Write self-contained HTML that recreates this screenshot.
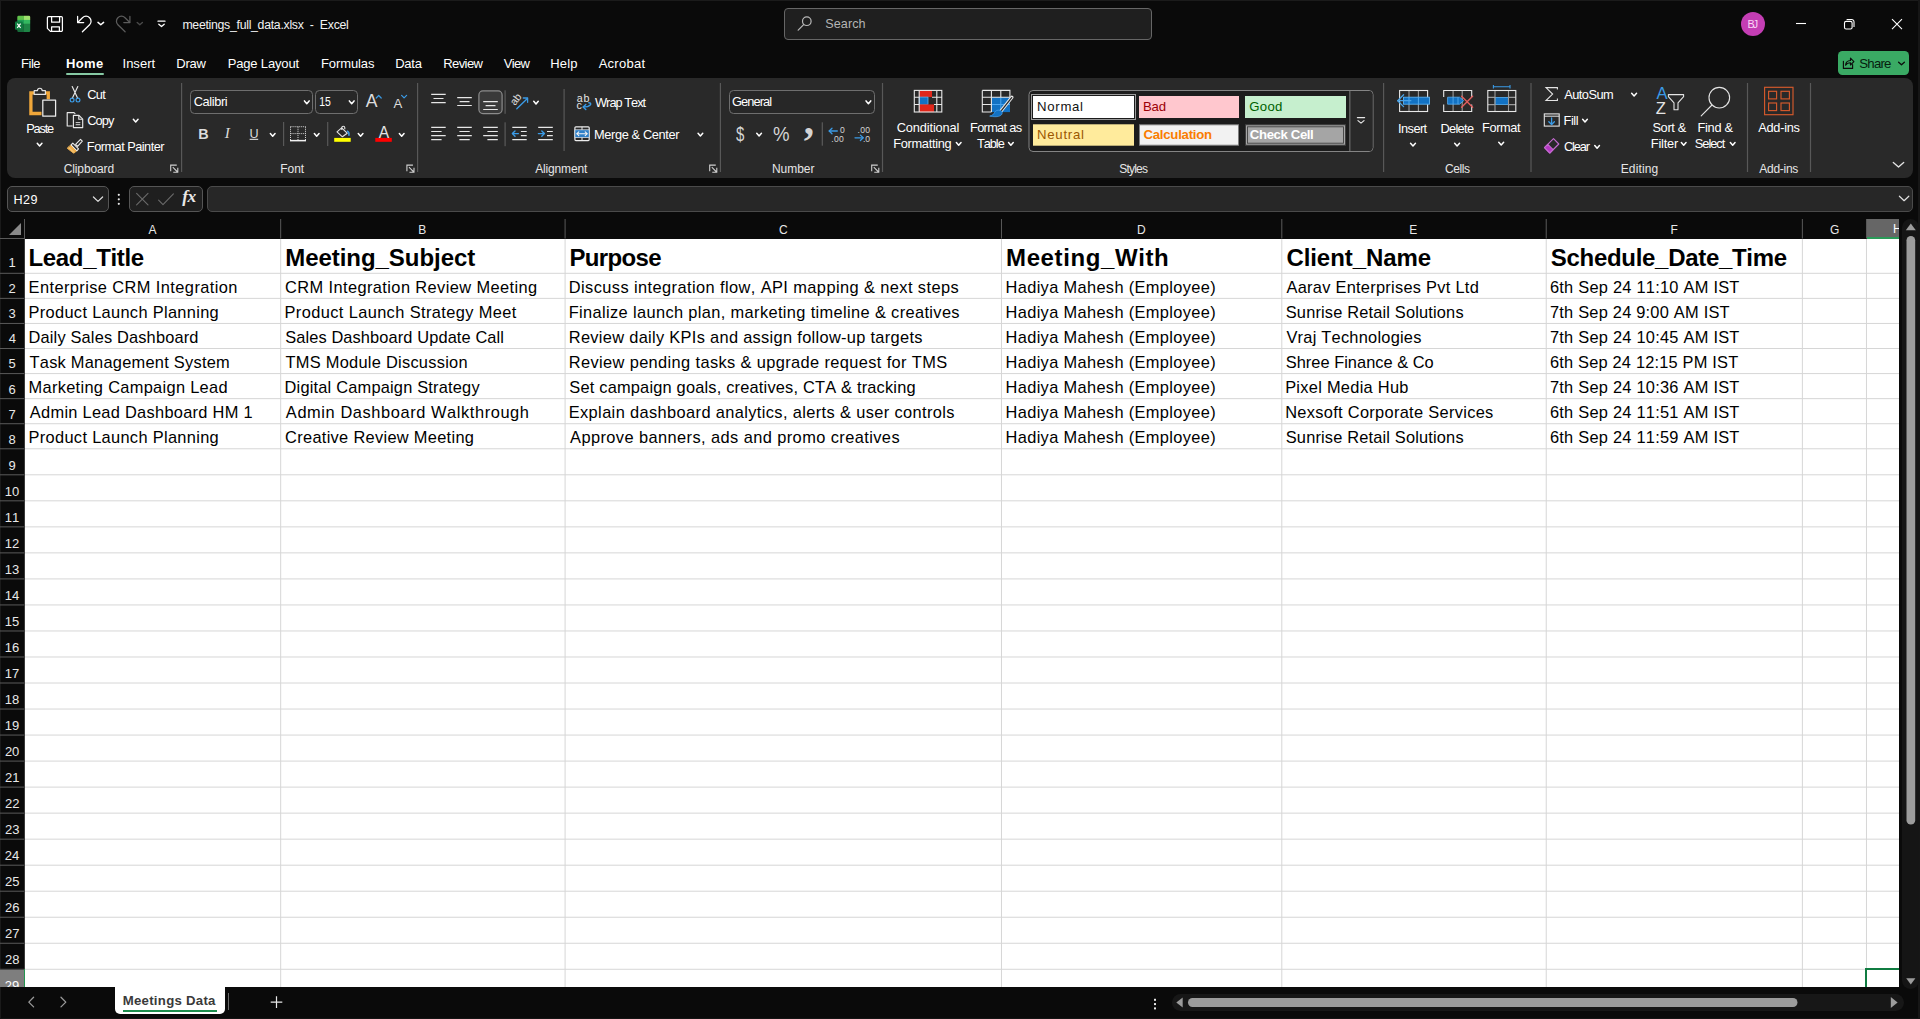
<!DOCTYPE html>
<html lang="en"><head><meta charset="utf-8"><title>meetings_full_data.xlsx - Excel</title>
<style>
html,body{margin:0;padding:0;background:#0a0a0a;}
body{width:1920px;height:1019px;position:relative;overflow:hidden;font-family:"Liberation Sans",sans-serif;font-kerning:none;-webkit-font-smoothing:antialiased;}
.t{position:absolute;white-space:pre;line-height:1;}
.r{position:absolute;}
svg{overflow:visible}
</style></head>
<body>
<div class="r" style="left:0px;top:0px;width:1920px;height:1019px;background:#0a0a0a;"></div>
<div class="r" style="left:0px;top:0px;width:1920px;height:1px;background:#1b1b1b;"></div>
<div class="r" style="left:1918px;top:0px;width:2px;height:1019px;background:#161616;"></div>
<div class="r" style="left:0px;top:0px;width:1px;height:1019px;background:#1a1a1a;"></div>
<div class="r" style="left:0px;top:1018px;width:1920px;height:1px;background:#141414;"></div>
<div class="r" style="left:7px;top:78px;width:1906px;height:100px;background:#292929;border-radius:8px;"></div>
<div class="r" style="left:25px;top:239px;width:1874px;height:748px;background:#fff;"></div>
<svg class="r" style="left:0;top:0" width="1920" height="1019" viewBox="0 0 1920 1019"><path d="M280.68 239V987M565.08 239V987M1001.47 239V987M1281.80 239V987M1546.23 239V987M1802.37 239V987M1866.47 239V987M25 273.30H1899M25 298.37H1899M25 323.44H1899M25 348.51H1899M25 373.58H1899M25 398.65H1899M25 423.72H1899M25 448.79H1899M25 474.81H1899M25 500.84H1899M25 526.87H1899M25 552.89H1899M25 578.91H1899M25 604.94H1899M25 630.97H1899M25 656.99H1899M25 683.01H1899M25 709.04H1899M25 735.07H1899M25 761.09H1899M25 787.12H1899M25 813.14H1899M25 839.16H1899M25 865.19H1899M25 891.21H1899M25 917.24H1899M25 943.26H1899M25 969.29H1899" stroke="#d6d6d6" stroke-width="1" fill="none"/><path d="M24.50 219V238.5M280.68 219V238.5M565.08 219V238.5M1001.47 219V238.5M1281.80 219V238.5M1546.23 219V238.5M1802.37 219V238.5M1866.47 219V238.5M0 238.5H25M0 273.30H24.5M0 298.37H24.5M0 323.44H24.5M0 348.51H24.5M0 373.58H24.5M0 398.65H24.5M0 423.72H24.5M0 448.79H24.5M0 474.81H24.5M0 500.84H24.5M0 526.87H24.5M0 552.89H24.5M0 578.91H24.5M0 604.94H24.5M0 630.97H24.5M0 656.99H24.5M0 683.01H24.5M0 709.04H24.5M0 735.07H24.5M0 761.09H24.5M0 787.12H24.5M0 813.14H24.5M0 839.16H24.5M0 865.19H24.5M0 891.21H24.5M0 917.24H24.5M0 943.26H24.5M0 969.29H24.5" stroke="#5a5a5a" stroke-width="1" fill="none"/><path d="M24.5 239V987" stroke="#3a3a3a" stroke-width="1" fill="none"/></svg>
<div class="r" style="left:1867px;top:219px;width:32px;height:19px;background:#666;"></div>
<div class="r" style="left:1867px;top:237px;width:32px;height:1.5px;background:#2a9a58;"></div>
<div class="r" style="left:0px;top:969.8px;width:24px;height:17.2px;background:#7e7e7e;"></div>
<div class="r" style="left:23.5px;top:969px;width:1.5px;height:18px;background:#23964f;"></div>
<svg class="r" style="left:9px;top:223px" width="13" height="13"><path d="M12 0V12H0Z" fill="#8a8a8a"/></svg>
<span class="t" style="left:148.50px;top:224.00px;font-size:12px;color:#e8e8e8;">A</span>
<span class="t" style="left:418.32px;top:224.00px;font-size:12px;color:#e8e8e8;">B</span>
<span class="t" style="left:779.09px;top:224.00px;font-size:12px;color:#e8e8e8;">C</span>
<span class="t" style="left:1136.96px;top:224.00px;font-size:12px;color:#e8e8e8;">D</span>
<span class="t" style="left:1409.26px;top:224.00px;font-size:12px;color:#e8e8e8;">E</span>
<span class="t" style="left:1670.58px;top:224.00px;font-size:12px;color:#e8e8e8;">F</span>
<span class="t" style="left:1829.98px;top:224.00px;font-size:12px;color:#e8e8e8;">G</span>
<div class="r" style="left:1867px;top:219px;width:32px;height:19px;overflow:hidden"><span class="t" style="left:26px;top:4.3px;font-size:12px;color:#fff">H</span></div>
<span class="t" style="left:8.41px;top:256.00px;font-size:13px;color:#e8e8e8;">1</span>
<span class="t" style="left:8.59px;top:282.00px;font-size:13px;color:#e8e8e8;">2</span>
<span class="t" style="left:8.62px;top:307.00px;font-size:13px;color:#e8e8e8;">3</span>
<span class="t" style="left:8.63px;top:332.00px;font-size:13px;color:#e8e8e8;">4</span>
<span class="t" style="left:8.60px;top:357.00px;font-size:13px;color:#e8e8e8;">5</span>
<span class="t" style="left:8.54px;top:383.00px;font-size:13px;color:#e8e8e8;">6</span>
<span class="t" style="left:8.58px;top:408.00px;font-size:13px;color:#e8e8e8;">7</span>
<span class="t" style="left:8.59px;top:433.00px;font-size:13px;color:#e8e8e8;">8</span>
<span class="t" style="left:8.59px;top:459.00px;font-size:13px;color:#e8e8e8;">9</span>
<span class="t" style="left:4.73px;top:485.00px;font-size:13px;color:#e8e8e8;">10</span>
<span class="t" style="left:4.79px;top:511.00px;font-size:13px;color:#e8e8e8;">11</span>
<span class="t" style="left:4.80px;top:537.00px;font-size:13px;color:#e8e8e8;">12</span>
<span class="t" style="left:4.76px;top:563.00px;font-size:13px;color:#e8e8e8;">13</span>
<span class="t" style="left:4.67px;top:589.00px;font-size:13px;color:#e8e8e8;">14</span>
<span class="t" style="left:4.75px;top:615.00px;font-size:13px;color:#e8e8e8;">15</span>
<span class="t" style="left:4.76px;top:641.00px;font-size:13px;color:#e8e8e8;">16</span>
<span class="t" style="left:4.80px;top:667.00px;font-size:13px;color:#e8e8e8;">17</span>
<span class="t" style="left:4.76px;top:693.00px;font-size:13px;color:#e8e8e8;">18</span>
<span class="t" style="left:4.78px;top:719.00px;font-size:13px;color:#e8e8e8;">19</span>
<span class="t" style="left:4.90px;top:745.00px;font-size:13px;color:#e8e8e8;">20</span>
<span class="t" style="left:4.96px;top:771.00px;font-size:13px;color:#e8e8e8;">21</span>
<span class="t" style="left:4.97px;top:797.00px;font-size:13px;color:#e8e8e8;">22</span>
<span class="t" style="left:4.93px;top:823.00px;font-size:13px;color:#e8e8e8;">23</span>
<span class="t" style="left:4.83px;top:849.00px;font-size:13px;color:#e8e8e8;">24</span>
<span class="t" style="left:4.92px;top:875.00px;font-size:13px;color:#e8e8e8;">25</span>
<span class="t" style="left:4.93px;top:901.00px;font-size:13px;color:#e8e8e8;">26</span>
<span class="t" style="left:4.97px;top:927.00px;font-size:13px;color:#e8e8e8;">27</span>
<span class="t" style="left:4.93px;top:953.00px;font-size:13px;color:#e8e8e8;">28</span>
<div class="r" style="left:0;top:969px;width:23px;height:18px;overflow:hidden"><span class="t" style="left:4.8px;top:9.5px;font-size:13px;color:#fff">29</span></div>
<div class="r" style="left:1865px;top:968px;width:34px;height:19px;background:transparent;border:2px solid #107c41;border-right:none;border-bottom:none;box-sizing:border-box;"></div>
<span class="t" style="left:28.44px;top:246.00px;font-size:24px;color:#000;letter-spacing:-0.325px;font-weight:bold;">Lead_Title</span>
<span class="t" style="left:285.19px;top:246.00px;font-size:24px;color:#000;letter-spacing:-0.043px;font-weight:bold;">Meeting_Subject</span>
<span class="t" style="left:569.49px;top:246.00px;font-size:24px;color:#000;letter-spacing:-0.650px;font-weight:bold;">Purpose</span>
<span class="t" style="left:1006.09px;top:246.00px;font-size:24px;color:#000;letter-spacing:0.600px;font-weight:bold;">Meeting_With</span>
<span class="t" style="left:1286.42px;top:246.00px;font-size:24px;color:#000;letter-spacing:-0.068px;font-weight:bold;">Client_Name</span>
<span class="t" style="left:1550.81px;top:246.00px;font-size:24px;color:#000;letter-spacing:-0.301px;font-weight:bold;">Schedule_Date_Time</span>
<span class="t" style="left:28.55px;top:279.00px;font-size:16.4px;color:#000;letter-spacing:0.412px;">Enterprise CRM Integration</span>
<span class="t" style="left:28.55px;top:304.00px;font-size:16.4px;color:#000;letter-spacing:0.318px;">Product Launch Planning</span>
<span class="t" style="left:28.55px;top:329.00px;font-size:16.4px;color:#000;letter-spacing:0.159px;">Daily Sales Dashboard</span>
<span class="t" style="left:29.53px;top:354.00px;font-size:16.4px;color:#000;letter-spacing:0.250px;">Task Management System</span>
<span class="t" style="left:28.55px;top:379.00px;font-size:16.4px;color:#000;letter-spacing:0.307px;">Marketing Campaign Lead</span>
<span class="t" style="left:29.87px;top:404.00px;font-size:16.4px;color:#000;letter-spacing:0.283px;">Admin Lead Dashboard HM 1</span>
<span class="t" style="left:28.55px;top:429.00px;font-size:16.4px;color:#000;letter-spacing:0.318px;">Product Launch Planning</span>
<span class="t" style="left:285.07px;top:279.00px;font-size:16.4px;color:#000;letter-spacing:0.400px;">CRM Integration Review Meeting</span>
<span class="t" style="left:284.55px;top:304.00px;font-size:16.4px;color:#000;letter-spacing:0.381px;">Product Launch Strategy Meet</span>
<span class="t" style="left:285.16px;top:329.00px;font-size:16.4px;color:#000;letter-spacing:0.111px;">Sales Dashboard Update Call</span>
<span class="t" style="left:285.53px;top:354.00px;font-size:16.4px;color:#000;letter-spacing:0.266px;">TMS Module Discussion</span>
<span class="t" style="left:284.55px;top:379.00px;font-size:16.4px;color:#000;letter-spacing:0.194px;">Digital Campaign Strategy</span>
<span class="t" style="left:285.87px;top:404.00px;font-size:16.4px;color:#000;letter-spacing:0.589px;">Admin Dashboard Walkthrough</span>
<span class="t" style="left:285.07px;top:429.00px;font-size:16.4px;color:#000;letter-spacing:0.304px;">Creative Review Meeting</span>
<span class="t" style="left:568.75px;top:279.00px;font-size:16.4px;color:#000;letter-spacing:0.409px;">Discuss integration flow, API mapping &amp; next steps</span>
<span class="t" style="left:568.75px;top:304.00px;font-size:16.4px;color:#000;letter-spacing:0.357px;">Finalize launch plan, marketing timeline &amp; creatives</span>
<span class="t" style="left:568.75px;top:329.00px;font-size:16.4px;color:#000;letter-spacing:0.309px;">Review daily KPIs and assign follow-up targets</span>
<span class="t" style="left:568.75px;top:354.00px;font-size:16.4px;color:#000;letter-spacing:0.371px;">Review pending tasks &amp; upgrade request for TMS</span>
<span class="t" style="left:569.36px;top:379.00px;font-size:16.4px;color:#000;letter-spacing:0.188px;">Set campaign goals, creatives, CTA &amp; tracking</span>
<span class="t" style="left:568.75px;top:404.00px;font-size:16.4px;color:#000;letter-spacing:0.373px;">Explain dashboard analytics, alerts &amp; user controls</span>
<span class="t" style="left:570.07px;top:429.00px;font-size:16.4px;color:#000;letter-spacing:0.413px;">Approve banners, ads and promo creatives</span>
<span class="t" style="left:1005.55px;top:279.00px;font-size:16.4px;color:#000;letter-spacing:0.339px;">Hadiya Mahesh (Employee)</span>
<span class="t" style="left:1005.55px;top:304.00px;font-size:16.4px;color:#000;letter-spacing:0.339px;">Hadiya Mahesh (Employee)</span>
<span class="t" style="left:1005.55px;top:329.00px;font-size:16.4px;color:#000;letter-spacing:0.339px;">Hadiya Mahesh (Employee)</span>
<span class="t" style="left:1005.55px;top:354.00px;font-size:16.4px;color:#000;letter-spacing:0.339px;">Hadiya Mahesh (Employee)</span>
<span class="t" style="left:1005.55px;top:379.00px;font-size:16.4px;color:#000;letter-spacing:0.339px;">Hadiya Mahesh (Employee)</span>
<span class="t" style="left:1005.55px;top:404.00px;font-size:16.4px;color:#000;letter-spacing:0.339px;">Hadiya Mahesh (Employee)</span>
<span class="t" style="left:1005.55px;top:429.00px;font-size:16.4px;color:#000;letter-spacing:0.339px;">Hadiya Mahesh (Employee)</span>
<span class="t" style="left:1286.47px;top:279.00px;font-size:16.4px;color:#000;letter-spacing:0.268px;">Aarav Enterprises Pvt Ltd</span>
<span class="t" style="left:1285.76px;top:304.00px;font-size:16.4px;color:#000;letter-spacing:0.166px;">Sunrise Retail Solutions</span>
<span class="t" style="left:1286.43px;top:329.00px;font-size:16.4px;color:#000;letter-spacing:0.237px;">Vraj Technologies</span>
<span class="t" style="left:1285.76px;top:354.00px;font-size:16.4px;color:#000;letter-spacing:0.021px;">Shree Finance &amp; Co</span>
<span class="t" style="left:1285.15px;top:379.00px;font-size:16.4px;color:#000;letter-spacing:0.280px;">Pixel Media Hub</span>
<span class="t" style="left:1285.15px;top:404.00px;font-size:16.4px;color:#000;letter-spacing:0.309px;">Nexsoft Corporate Services</span>
<span class="t" style="left:1285.76px;top:429.00px;font-size:16.4px;color:#000;letter-spacing:0.166px;">Sunrise Retail Solutions</span>
<span class="t" style="left:1549.97px;top:279.00px;font-size:16.4px;color:#000;letter-spacing:0.243px;">6th Sep 24 11:10 AM IST</span>
<span class="t" style="left:1549.96px;top:304.00px;font-size:16.4px;color:#000;letter-spacing:0.223px;">7th Sep 24 9:00 AM IST</span>
<span class="t" style="left:1549.96px;top:329.00px;font-size:16.4px;color:#000;letter-spacing:0.244px;">7th Sep 24 10:45 AM IST</span>
<span class="t" style="left:1549.97px;top:354.00px;font-size:16.4px;color:#000;letter-spacing:0.189px;">6th Sep 24 12:15 PM IST</span>
<span class="t" style="left:1549.96px;top:379.00px;font-size:16.4px;color:#000;letter-spacing:0.244px;">7th Sep 24 10:36 AM IST</span>
<span class="t" style="left:1549.97px;top:404.00px;font-size:16.4px;color:#000;letter-spacing:0.243px;">6th Sep 24 11:51 AM IST</span>
<span class="t" style="left:1549.97px;top:429.00px;font-size:16.4px;color:#000;letter-spacing:0.243px;">6th Sep 24 11:59 AM IST</span>
<svg class="r" style="left:0;top:78px" width="1920" height="100" viewBox="0 78 1920 100"><g fill="none" stroke-linejoin="round"><path d="M34 92.800h-3.100v20.700h10.600M45.600 92.800h2.700v6.500" stroke="#f0a73a" stroke-width="3.300" stroke-linejoin="miter"/><path d="M34.200 94.400v-3.800h3.300a2.300 2.300 0 0 1 4.600 0h3.300v3.800z" stroke="#e4e4e4" stroke-width="1.150"/><rect x="42.800" y="100.200" width="12.800" height="16" fill="#292929" stroke="#ececec" stroke-width="1.250"/></g><path d="M37.25 143.35l2.35 2.70 2.35 -2.70" fill="none" stroke="#fff" stroke-width="1.5" stroke-linecap="round" stroke-linejoin="round"/><g fill="none" stroke-linecap="round"><path d="M72.200 86.600l5.600 11.800M77.800 86.600l-5.600 11.800" stroke="#e8e8e8" stroke-width="1.150"/><circle cx="72.100" cy="100.100" r="1.900" stroke="#3b9be6" stroke-width="1.200"/><circle cx="78" cy="100.100" r="1.900" stroke="#3b9be6" stroke-width="1.200"/></g><g fill="none" stroke="#e8e8e8" stroke-width="1.150" stroke-linejoin="round"><path d="M72.600 126h-5.400v-13.400h6.800l1.300 1.300"/><path d="M73.400 115.400h5.600l3.700 3.700v8.500h-9.300z" fill="#292929"/><path d="M78.800 115.600v3.700h3.700"/><path d="M75.700 122.600h4.600M75.700 124.700h4.600" stroke-width=".9"/></g><path d="M133.35 119.25l2.35 2.70 2.35 -2.70" fill="none" stroke="#fff" stroke-width="1.5" stroke-linecap="round" stroke-linejoin="round"/><g stroke-linejoin="round" stroke-linecap="round"><path d="M80.500 139.300l1.800 1.800-4.700 5.300-2-2z" fill="#292929" stroke="#ececec" stroke-width="1.100"/><path d="M72.800 143.200l5.700 5.700-1.700 1.900-5.800-5.800z" fill="#292929" stroke="#ececec" stroke-width="1.100"/><path d="M70.600 145.600l5.700 5.700-2.800 1.800-6-4.700z" fill="#f1b04c" stroke="#f1b04c" stroke-width="1"/><path d="M68.600 147.300l5.400 5.200" stroke="#f7d394" stroke-width=".8"/></g><g fill="none" stroke="#d0d0d0" stroke-width="1.1" stroke-linecap="square"><path d="M176.2 165.1H170.7V170.6"/><path d="M173.2 167.6L177.6 172.0M177.8 168.2V172.2H173.8"/></g><rect x="181.0" y="83" width="1.2" height="89" fill="#585858"/><rect x="190.5" y="90.5" width="122" height="23" rx="4" fill="#272727" stroke="#6e6e6e" stroke-width="1"/><rect x="315.5" y="90.5" width="42" height="23" rx="4" fill="#272727" stroke="#6e6e6e" stroke-width="1"/><path d="M304.45 100.90l2.35 2.80 2.35 -2.80" fill="none" stroke="#fff" stroke-width="1.5" stroke-linecap="round" stroke-linejoin="round"/><path d="M349.35 100.90l2.35 2.80 2.35 -2.80" fill="none" stroke="#fff" stroke-width="1.5" stroke-linecap="round" stroke-linejoin="round"/><path d="M376.200 98l2.500-2.500 2.500 2.500" fill="none" stroke="#3b9be6" stroke-width="1.200" stroke-linecap="round" stroke-linejoin="round"/><path d="M401.600 95.400l2.500 2.500 2.500-2.500" fill="none" stroke="#3b9be6" stroke-width="1.200" stroke-linecap="round" stroke-linejoin="round"/><rect x="249.600" y="138.800" width="8.600" height="1.100" fill="#dcdcdc"/><path d="M270.35 133.45l2.35 2.70 2.35 -2.70" fill="none" stroke="#fff" stroke-width="1.5" stroke-linecap="round" stroke-linejoin="round"/><rect x="283.0" y="122" width="1.2" height="24" fill="#585858"/><g fill="none" stroke="#dedede" stroke-width="1" stroke-dasharray="1 1.050"><path d="M290.500 126.700h15M290.500 126.700v13.500M305.500 126.700v13.500M298 126.700v13.500M290.500 133.600h15"/></g><rect x="290" y="139.900" width="16" height="1.500" fill="#f0f0f0"/><path d="M314.35 133.45l2.35 2.70 2.35 -2.70" fill="none" stroke="#fff" stroke-width="1.5" stroke-linecap="round" stroke-linejoin="round"/><rect x="327.1" y="122" width="1.2" height="24" fill="#585858"/><g fill="none" stroke="#e4e4e4" stroke-width="1.100" stroke-linejoin="round"><path d="M341.600 127.800l5.600 5.400-4.800 3.600-5.400-4.900z"/><path d="M341.800 130v-2.300a1.500 1.500 0 0 1 3 0v1.600"/></g><path d="M347.400 131.200c1.400 1 1.900 2.400 1.500 4" fill="none" stroke="#3b9be6" stroke-width="1.500" stroke-linecap="round"/><rect x="334.200" y="137.900" width="16.500" height="3.900" fill="#ffff00"/><path d="M358.25 133.45l2.35 2.70 2.35 -2.70" fill="none" stroke="#fff" stroke-width="1.5" stroke-linecap="round" stroke-linejoin="round"/><rect x="375.300" y="137.900" width="16.500" height="3.900" fill="#ff0000"/><path d="M399.35 133.45l2.35 2.70 2.35 -2.70" fill="none" stroke="#fff" stroke-width="1.5" stroke-linecap="round" stroke-linejoin="round"/><g fill="none" stroke="#d0d0d0" stroke-width="1.1" stroke-linecap="square"><path d="M412.4 165.1H406.9V170.6"/><path d="M409.4 167.6L413.8 172.0M414.0 168.2V172.2H410.0"/></g><rect x="417.0" y="83" width="1.2" height="89" fill="#585858"/><path d="M431.2 94.4H445.7M433.5 98.5H443.5M431.2 102.6H445.7" stroke="#e6e6e6" stroke-width="1.2" fill="none"/><path d="M457.2 97.6H471.8M459.6 101.6H469.5M457.2 105.5H471.8" stroke="#e6e6e6" stroke-width="1.2" fill="none"/><rect x="478.900" y="90.900" width="23.200" height="22.700" rx="4" fill="#3a3a3a" stroke="#8c8c8c" stroke-width="1.200"/><path d="M483.2 101.6H497.8M485.6 105.6H495.5M483.2 109.5H497.8" stroke="#e6e6e6" stroke-width="1.2" fill="none"/><rect x="504.5" y="90.3" width="1.2" height="23.5" fill="#5a5a5a"/><g fill="none" stroke="#3b9be6" stroke-width="1.300" stroke-linecap="round" stroke-linejoin="round"><path d="M516.800 108.800l10.600-10.300"/><path d="M523.300 98h4.300v4.300"/></g><path d="M533.75 101.35l2.25 2.70 2.25 -2.70" fill="none" stroke="#fff" stroke-width="1.5" stroke-linecap="round" stroke-linejoin="round"/><path d="M431.2 127.4H445.7M431.2 131.5H441.6M431.2 135.6H445.7M431.2 139.7H441.6" stroke="#e6e6e6" stroke-width="1.2" fill="none"/><path d="M457.2 127.4H471.8M459.4 131.5H469.7M457.2 135.6H471.8M459.4 139.7H469.7" stroke="#e6e6e6" stroke-width="1.2" fill="none"/><path d="M483.2 127.4H497.8M487.4 131.5H497.8M483.2 135.6H497.8M487.4 139.7H497.8" stroke="#e6e6e6" stroke-width="1.2" fill="none"/><rect x="504.5" y="122.3" width="1.2" height="23.89999999999999" fill="#5a5a5a"/><path d="M512.3 127.4H526.7M520.9 131.5H526.7M520.9 135.6H526.7M512.3 139.7H526.7" stroke="#e6e6e6" stroke-width="1.2" fill="none"/><g fill="none" stroke="#3b9be6" stroke-width="1.400" stroke-linecap="round" stroke-linejoin="round"><path d="M512.600 133.600h5.800"/><path d="M515 131l-2.600 2.600 2.600 2.600"/></g><path d="M538.2 127.4H552.8M547.0 131.5H552.8M547.0 135.6H552.8M538.2 139.7H552.8" stroke="#e6e6e6" stroke-width="1.2" fill="none"/><g fill="none" stroke="#3b9be6" stroke-width="1.400" stroke-linecap="round" stroke-linejoin="round"><path d="M538.400 133.600h5.800"/><path d="M541.800 131l2.600 2.600-2.600 2.600"/></g><rect x="563.5" y="89" width="1.2" height="62" fill="#585858"/><g fill="none" stroke="#3b9be6" stroke-width="1.400" stroke-linecap="round" stroke-linejoin="round"><path d="M588.800 102.700c2 .1 2.500 1.300 1.200 2.500-1.300 1.200-3.400 1.700-6.600 1.700"/><path d="M585.800 104.400l-2.700 2.500 2.700 2.500"/></g><rect x="574.900" y="126.800" width="14.300" height="13.800" rx="1" fill="none" stroke="#ececec" stroke-width="1.200"/><rect x="574.900" y="129.800" width="14.300" height="7.800" fill="#2d7fc8" stroke="#ececec" stroke-width=".7"/><path d="M582 126.800v3M582 137.600v3" stroke="#ececec" stroke-width="1"/><g fill="none" stroke="#f4f4f4" stroke-width="1.100" stroke-linecap="round" stroke-linejoin="round"><path d="M577 133.700h10"/><path d="M578.800 131.800l-1.900 1.900 1.900 1.900M585.200 131.800l1.900 1.900-1.900 1.900"/></g><path d="M698.05 133.35l2.35 2.70 2.35 -2.70" fill="none" stroke="#fff" stroke-width="1.5" stroke-linecap="round" stroke-linejoin="round"/><g fill="none" stroke="#d0d0d0" stroke-width="1.1" stroke-linecap="square"><path d="M715.2 165.1H709.7V170.6"/><path d="M712.2 167.6L716.6 172.0M716.8 168.2V172.2H712.8"/></g><rect x="719.8" y="83" width="1.2" height="89" fill="#585858"/><rect x="729.500" y="90.500" width="145" height="23" rx="4" fill="#272727" stroke="#6e6e6e"/><path d="M866.05 100.90l2.35 2.80 2.35 -2.80" fill="none" stroke="#fff" stroke-width="1.5" stroke-linecap="round" stroke-linejoin="round"/><path d="M756.75 133.25l2.35 2.70 2.35 -2.70" fill="none" stroke="#fff" stroke-width="1.5" stroke-linecap="round" stroke-linejoin="round"/><rect x="821.7" y="122.3" width="1.2" height="23.39999999999999" fill="#5a5a5a"/><g fill="none" stroke="#3b9be6" stroke-width="1.300" stroke-linecap="round" stroke-linejoin="round"><path d="M829.300 131h8"/><path d="M832 128.300l-2.800 2.700 2.800 2.700"/><path d="M855 137.800h8"/><path d="M860.400 135.100l2.800 2.700-2.800 2.700"/></g><g fill="none" stroke="#d0d0d0" stroke-width="1.1" stroke-linecap="square"><path d="M877.2 165.1H871.7V170.6"/><path d="M874.2 167.6L878.6 172.0M878.8 168.2V172.2H874.8"/></g><rect x="881.9" y="83" width="1.2" height="89" fill="#585858"/><rect x="919.200" y="90.200" width="12.800" height="6.900" fill="#e0261a"/><rect x="919.200" y="97.100" width="8.800" height="7.300" fill="#1272c4" stroke="#5fb2f2" stroke-width=".8"/><rect x="919.200" y="104.400" width="14.800" height="7.700" fill="#e0261a"/><g fill="none" stroke="#e8e8e8" stroke-width="1.100"><rect x="914.300" y="90.400" width="27.500" height="21.600"/><path d="M919.200 90.400v21.600M936.800 90.400v21.600M914.300 97.200h5M932 97.200h10M914.300 104.500h5M934 104.500h8"/></g><path d="M956.35 142.45l2.35 2.70 2.35 -2.70" fill="none" stroke="#fff" stroke-width="1.5" stroke-linecap="round" stroke-linejoin="round"/><rect x="991.400" y="97.200" width="18.600" height="14.900" fill="#1272c4"/><path d="M1000.800 97.200v15M991.400 104.500h18.600" stroke="#4aa5f0" stroke-width="1" fill="none"/><g fill="none" stroke="#e8e8e8" stroke-width="1.100"><path d="M982.300 90.400h27.600v6.800M982.300 90.400v21.600h9.100M991.400 90.400v21.600M1000.800 90.400v6.800M982.300 97.200h27.700M982.300 104.500h9.100"/></g><path d="M1011.900 97.300l-11.300 14.300" stroke="#e8e8e8" stroke-width="3.300" stroke-linecap="round" fill="none"/><path d="M1011.700 97.600l-10.900 13.800" stroke="#2a2a2a" stroke-width="1.300" stroke-linecap="round" fill="none"/><path d="M999.800 110.300c1.600.3 2.500 1.400 2.400 2.800-.3 2.900-4.600 4.600-12.500 3 2.600-.5 3.800-1.700 4.700-3.500 1.100-2 3.200-2.800 5.400-2.300z" fill="#1272c4" stroke="#4aa5f0" stroke-width=".7"/><path d="M1008.55 142.45l2.35 2.70 2.35 -2.70" fill="none" stroke="#fff" stroke-width="1.5" stroke-linecap="round" stroke-linejoin="round"/><rect x="1029" y="90.500" width="344" height="61" rx="4" fill="#1c1c1c" stroke="#848484"/><path d="M1350 90.500v61" stroke="#848484" stroke-width="1.200" fill="none"/><path d="M1350.600 91h18.400a3.500 3.500 0 0 1 3.500 3.500v53a3.500 3.500 0 0 1-3.500 3.500h-18.400z" fill="#292929"/><rect x="1031.500" y="94.500" width="104" height="25" fill="none" stroke="#9a9a9a" stroke-width="1"/><rect x="1033" y="96" width="101" height="22" fill="#fff"/><rect x="1139" y="96" width="100" height="22" fill="#ffc7ce"/><rect x="1245" y="96" width="101" height="22" fill="#c6efce"/><rect x="1033" y="124.300" width="101" height="21.400" fill="#ffeb9c"/><rect x="1139.500" y="124.800" width="99" height="20.400" fill="#f2f2f2" stroke="#7f7f7f"/><rect x="1245.500" y="124.800" width="100" height="20.400" fill="#a5a5a5" stroke="#3f3f3f"/><rect x="1247.500" y="126.800" width="96" height="16.400" fill="none" stroke="#3f3f3f" stroke-width=".9"/><g fill="none" stroke="#e8e8e8" stroke-width="1.200" stroke-linecap="round" stroke-linejoin="round"><path d="M1357.400 117.600h7.200"/><path d="M1358 120.600l3 2.500 3-2.500"/></g><rect x="1383.0" y="83" width="1.2" height="89" fill="#585858"/><g fill="none"><path d="M1409 90.500v21M1418.400 90.500v21" stroke="#9a9a9a" stroke-width="1.100"/><rect x="1399.600" y="90.500" width="28" height="21" stroke="#e8e8e8" stroke-width="1.100"/><rect x="1403.500" y="97.200" width="26" height="7" fill="#1272c4" stroke="#5ab0f0" stroke-width=".9"/><path d="M1409 97.200v7M1418.400 97.200v7" stroke="#5ab0f0" stroke-width=".9"/><g stroke="#4ba3e6" stroke-width="1.300" stroke-linecap="round" stroke-linejoin="round"><path d="M1397.800 100.700h13"/><path d="M1403.600 94.800l-5.900 5.900 5.900 5.900"/></g></g><path d="M1410.55 143.35l2.45 2.70 2.45 -2.70" fill="none" stroke="#fff" stroke-width="1.5" stroke-linecap="round" stroke-linejoin="round"/><g fill="none"><path d="M1453.100 90.500v21M1462.200 90.500v21" stroke="#9a9a9a" stroke-width="1.100"/><path d="M1443.700 97v-6.500h28v6.500M1443.700 104.400v7.100h28v-7.100" stroke="#e8e8e8" stroke-width="1.100"/><path d="M1447.600 97.200h12l4 3.500-4 3.500h-12z" fill="#1272c4" stroke="#5ab0f0" stroke-width=".8"/><path d="M1453.100 97.200v7M1458 97.200v7" stroke="#5ab0f0" stroke-width=".8"/><path d="M1461.600 96.200l11 11M1472.600 96.200l-11 11" stroke="#e25d5d" stroke-width="1.400" stroke-linecap="round"/></g><path d="M1454.65 143.35l2.45 2.70 2.45 -2.70" fill="none" stroke="#fff" stroke-width="1.5" stroke-linecap="round" stroke-linejoin="round"/><g fill="none"><path d="M1493.400 86.700h16.600M1493.400 84.900v3.600M1510 84.900v3.600" stroke="#3b9be6" stroke-width="1.100"/><rect x="1495" y="97.400" width="13.500" height="7.200" fill="#1272c4" stroke="#5ab0f0" stroke-width=".8"/><path d="M1495 90.500v21M1508.500 90.500v21M1487.800 97.400h7.200M1508.500 97.400h7.200M1487.800 104.600h7.200M1508.500 104.600h7.200" stroke="#9a9a9a" stroke-width="1.100"/><rect x="1487.800" y="90.500" width="28" height="21" stroke="#e8e8e8" stroke-width="1.100"/></g><path d="M1498.75 142.25l2.45 2.70 2.45 -2.70" fill="none" stroke="#fff" stroke-width="1.5" stroke-linecap="round" stroke-linejoin="round"/><rect x="1530.4" y="83" width="1.2" height="89" fill="#585858"/><path d="M1557.400 89.600v-2h-11.400l6.600 6.500-6.600 6.400h11.400v-2" fill="none" stroke="#e4e4e4" stroke-width="1.100" stroke-linejoin="miter"/><path d="M1631.65 93.35l2.45 2.70 2.45 -2.70" fill="none" stroke="#fff" stroke-width="1.5" stroke-linecap="round" stroke-linejoin="round"/><g fill="none"><rect x="1544.300" y="113.900" width="14.900" height="12.200" stroke="#e4e4e4" stroke-width="1.100"/><path d="M1544.300 116.200h14.900" stroke="#e4e4e4" stroke-width="1"/><g stroke="#3b9be6" stroke-width="1.300" stroke-linecap="round" stroke-linejoin="round"><path d="M1551.600 118v6.400"/><path d="M1548.800 121.700l2.800 2.800 2.800-2.800"/></g></g><path d="M1582.65 119.25l2.35 2.70 2.35 -2.70" fill="none" stroke="#fff" stroke-width="1.5" stroke-linecap="round" stroke-linejoin="round"/><g stroke-linejoin="round"><path d="M1553.500 138.700l5.300 5.300-9 9-5.300-5.300z" fill="none" stroke="#c46bd0" stroke-width="1.100"/><path d="M1547.800 144.400l5.300 5.300-3.300 3.300-5.300-5.300z" fill="#b637c4" stroke="#c46bd0" stroke-width="1.100"/></g><path d="M1594.75 145.55l2.35 2.70 2.35 -2.70" fill="none" stroke="#fff" stroke-width="1.5" stroke-linecap="round" stroke-linejoin="round"/><path d="M1668.400 94.600h15.200v2l-5.600 6.200v7h-4v-7l-5.600-6.200z" fill="none" stroke="#e4e4e4" stroke-width="1.100" stroke-linejoin="round"/><path d="M1681.35 142.45l2.35 2.70 2.35 -2.70" fill="none" stroke="#fff" stroke-width="1.5" stroke-linecap="round" stroke-linejoin="round"/><g fill="none" stroke="#e4e4e4" stroke-width="1.100" stroke-linecap="round"><circle cx="1719.300" cy="97.700" r="10.300"/><path d="M1712 105l-10.800 10.800"/></g><path d="M1730.35 142.45l2.35 2.70 2.35 -2.70" fill="none" stroke="#fff" stroke-width="1.5" stroke-linecap="round" stroke-linejoin="round"/><rect x="1746.9" y="83" width="1.2" height="89" fill="#585858"/><g fill="none" stroke="#d65a2c" stroke-width="1.150"><rect x="1764.600" y="87.300" width="28.400" height="27.400"/><rect x="1768.600" y="91.300" width="8" height="7.600"/><rect x="1781" y="91.300" width="8.400" height="7.600"/><rect x="1768.600" y="103" width="8" height="7.600"/><rect x="1781" y="103" width="8.400" height="7.600"/></g><rect x="1809.9" y="83" width="1.2" height="89" fill="#585858"/><path d="M1893.300 162.400l5.200 4.700 5.200-4.700" fill="none" stroke="#e4e4e4" stroke-width="1.300" stroke-linecap="round" stroke-linejoin="round"/></svg>
<span class="t" style="left:26.25px;top:123.00px;font-size:12.8px;color:#fff;letter-spacing:-1.203px;">Paste</span>
<span class="t" style="left:87.25px;top:89.00px;font-size:12.8px;color:#fff;letter-spacing:-0.737px;">Cut</span>
<span class="t" style="left:87.25px;top:115.00px;font-size:12.8px;color:#fff;letter-spacing:-0.902px;">Copy</span>
<span class="t" style="left:86.85px;top:141.00px;font-size:12.8px;color:#fff;letter-spacing:-0.530px;">Format Painter</span>
<span class="t" style="left:63.69px;top:163.00px;font-size:12px;color:#e6e6e6;letter-spacing:-0.110px;">Clipboard</span>
<span class="t" style="left:193.65px;top:96.00px;font-size:12.8px;color:#fff;letter-spacing:-0.377px;">Calibri</span>
<span class="t" style="left:318.92px;top:96.00px;font-size:12.8px;color:#fff;transform:scaleX(0.817);transform-origin:0.98px 0;">15</span>
<span class="t" style="left:365.77px;top:93.00px;font-size:17.6px;color:#dcdcdc;">A</span>
<span class="t" style="left:393.57px;top:97.00px;font-size:13.2px;color:#dcdcdc;">A</span>
<span class="t" style="left:198.24px;top:127.00px;font-size:14.4px;color:#dcdcdc;font-weight:bold;">B</span>
<span class="t" style="left:224.700px;top:124.600px;font-size:15.200px;color:#dcdcdc;font-family:'Liberation Serif',serif;font-style:italic;">I</span>
<span class="t" style="left:249.43px;top:128.00px;font-size:12.6px;color:#dcdcdc;">U</span>
<span class="t" style="left:378.77px;top:125.00px;font-size:15.6px;color:#e4e4e4;">A</span>
<span class="t" style="left:280.22px;top:163.00px;font-size:12px;color:#e6e6e6;letter-spacing:-0.046px;">Font</span>
<span class="t" style="left:509.500px;top:93.500px;font-size:10.500px;color:#e0e0e0;transform:rotate(-52deg);transform-origin:50% 50%;letter-spacing:-0.3px">ab</span>
<span class="t" style="left:576.65px;top:93.00px;font-size:10.7px;color:#e4e4e4;letter-spacing:0.902px;">ab</span>
<span class="t" style="left:576.55px;top:100.00px;font-size:10.7px;color:#e4e4e4;">c</span>
<span class="t" style="left:595.04px;top:97.00px;font-size:12.8px;color:#fff;letter-spacing:-0.985px;">Wrap Text</span>
<span class="t" style="left:594.05px;top:129.00px;font-size:12.8px;color:#fff;letter-spacing:-0.376px;">Merge &amp; Center</span>
<span class="t" style="left:535.18px;top:163.00px;font-size:12px;color:#e6e6e6;letter-spacing:-0.156px;">Alignment</span>
<span class="t" style="left:732.06px;top:96.00px;font-size:12.8px;color:#fff;letter-spacing:-0.906px;">General</span>
<span class="t" style="left:735.79px;top:125.00px;font-size:19.5px;color:#d4d4d4;transform:scaleX(.77);transform-origin:0 0;">$</span>
<span class="t" style="left:772.60px;top:125.00px;font-size:19.6px;color:#d4d4d4;transform:scaleX(.95);transform-origin:0 0;">%</span>
<span class="t" style="left:803.75px;top:99.9px;font-size:41.4px;color:#d4d4d4;font-family:'Liberation Serif',serif;font-weight:bold;">,</span>
<span class="t" style="left:839.96px;top:126.00px;font-size:8.6px;color:#d4d4d4;">0</span>
<span class="t" style="left:831.21px;top:135.00px;font-size:8.6px;color:#d4d4d4;letter-spacing:0.333px;">.00</span>
<span class="t" style="left:857.41px;top:126.00px;font-size:8.6px;color:#d4d4d4;letter-spacing:0.333px;">.00</span>
<span class="t" style="left:863.01px;top:135.00px;font-size:8.6px;color:#d4d4d4;letter-spacing:-0.151px;">.0</span>
<span class="t" style="left:771.92px;top:163.00px;font-size:12px;color:#e6e6e6;letter-spacing:-0.039px;">Number</span>
<span class="t" style="left:896.75px;top:122.00px;font-size:12.8px;color:#fff;letter-spacing:-0.144px;">Conditional</span>
<span class="t" style="left:893.15px;top:138.00px;font-size:12.8px;color:#fff;letter-spacing:-0.289px;">Formatting</span>
<span class="t" style="left:970.05px;top:122.00px;font-size:12.8px;color:#fff;letter-spacing:-0.700px;">Format as</span>
<span class="t" style="left:977.01px;top:138.00px;font-size:12.8px;color:#fff;letter-spacing:-1.066px;">Table</span>
<span class="t" style="left:1037.02px;top:100.00px;font-size:13.2px;color:#111;letter-spacing:0.705px;">Normal</span>
<span class="t" style="left:1142.92px;top:100.00px;font-size:13.2px;color:#9c0006;letter-spacing:-0.177px;">Bad</span>
<span class="t" style="left:1249.24px;top:100.00px;font-size:13.2px;color:#006100;letter-spacing:0.275px;">Good</span>
<span class="t" style="left:1037.02px;top:128.00px;font-size:13.2px;color:#9c5700;letter-spacing:0.736px;">Neutral</span>
<span class="t" style="left:1143.46px;top:128.00px;font-size:13.2px;color:#fa7d00;letter-spacing:-0.238px;font-weight:bold;">Calculation</span>
<span class="t" style="left:1249.86px;top:128.00px;font-size:13.2px;color:#fff;letter-spacing:-0.391px;font-weight:bold;">Check Cell</span>
<span class="t" style="left:1119.36px;top:163.00px;font-size:12px;color:#e6e6e6;letter-spacing:-0.820px;">Styles</span>
<span class="t" style="left:1398.12px;top:123.00px;font-size:12.8px;color:#fff;letter-spacing:-0.588px;">Insert</span>
<span class="t" style="left:1440.45px;top:123.00px;font-size:12.8px;color:#fff;letter-spacing:-0.676px;">Delete</span>
<span class="t" style="left:1482.05px;top:122.00px;font-size:12.8px;color:#fff;letter-spacing:-0.399px;">Format</span>
<span class="t" style="left:1445.09px;top:163.00px;font-size:12px;color:#e6e6e6;letter-spacing:-0.457px;">Cells</span>
<span class="t" style="left:1564.17px;top:89.00px;font-size:12.8px;color:#fff;letter-spacing:-0.514px;">AutoSum</span>
<span class="t" style="left:1563.55px;top:115.00px;font-size:12.8px;color:#fff;letter-spacing:-0.448px;">Fill</span>
<span class="t" style="left:1563.95px;top:141.00px;font-size:12.8px;color:#fff;letter-spacing:-1.106px;">Clear</span>
<span class="t" style="left:1656.47px;top:86.00px;font-size:16.6px;color:#3b9be6;">A</span>
<span class="t" style="left:1655.67px;top:101.00px;font-size:16.6px;color:#e4e4e4;">Z</span>
<span class="t" style="left:1652.42px;top:122.00px;font-size:12.8px;color:#fff;letter-spacing:-0.317px;">Sort &amp;</span>
<span class="t" style="left:1650.75px;top:138.00px;font-size:12.8px;color:#fff;letter-spacing:-0.176px;">Filter</span>
<span class="t" style="left:1697.45px;top:122.00px;font-size:12.8px;color:#fff;letter-spacing:-0.269px;">Find &amp;</span>
<span class="t" style="left:1694.82px;top:138.00px;font-size:12.8px;color:#fff;letter-spacing:-1.020px;">Select</span>
<span class="t" style="left:1620.72px;top:163.00px;font-size:12px;color:#e6e6e6;letter-spacing:0.128px;">Editing</span>
<span class="t" style="left:1758.28px;top:122.00px;font-size:12.8px;color:#fff;letter-spacing:-0.285px;">Add-ins</span>
<span class="t" style="left:1759.28px;top:163.00px;font-size:12px;color:#e6e6e6;letter-spacing:-0.272px;">Add-ins</span>
<div class="r" style="left:784px;top:8px;width:368px;height:32px;background:#1f1f1f;border:1px solid #666;border-radius:4px;box-sizing:border-box;"></div>
<span class="t" style="left:825.23px;top:18.00px;font-size:12.6px;color:#b4b4b4;letter-spacing:0.094px;">Search</span>
<span class="t" style="left:182.38px;top:19.00px;font-size:12.3px;color:#f2f2f2;letter-spacing:-0.289px;">meetings_full_data.xlsx  -  Excel</span>
<div class="r" style="left:1741px;top:12px;width:24px;height:24px;border-radius:50%;background:#c43eb4"></div>
<span class="t" style="left:1747.41px;top:19.00px;font-size:10.8px;color:#fbd9f6;letter-spacing:-1.916px;">BJ</span>
<span class="t" style="left:20.93px;top:57.00px;font-size:13px;color:#fff;letter-spacing:-0.434px;">File</span>
<span class="t" style="left:122.50px;top:57.00px;font-size:13px;color:#fff;letter-spacing:0.016px;">Insert</span>
<span class="t" style="left:176.23px;top:57.00px;font-size:13px;color:#fff;letter-spacing:-0.200px;">Draw</span>
<span class="t" style="left:227.63px;top:57.00px;font-size:13px;color:#fff;letter-spacing:-0.154px;">Page Layout</span>
<span class="t" style="left:321.03px;top:57.00px;font-size:13px;color:#fff;letter-spacing:-0.106px;">Formulas</span>
<span class="t" style="left:395.13px;top:57.00px;font-size:13px;color:#fff;letter-spacing:-0.198px;">Data</span>
<span class="t" style="left:443.13px;top:57.00px;font-size:13px;color:#fff;letter-spacing:-0.558px;">Review</span>
<span class="t" style="left:503.64px;top:57.00px;font-size:13px;color:#fff;letter-spacing:-0.617px;">View</span>
<span class="t" style="left:550.13px;top:57.00px;font-size:13px;color:#fff;letter-spacing:0.225px;">Help</span>
<span class="t" style="left:598.67px;top:57.00px;font-size:13px;color:#fff;letter-spacing:0.270px;">Acrobat</span>
<span class="t" style="left:65.93px;top:57.00px;font-size:13px;color:#fff;letter-spacing:0.399px;font-weight:bold;">Home</span>
<div class="r" style="left:66px;top:72.5px;width:38px;height:2.5px;background:#86c9a3;border-radius:1px;"></div>
<div class="r" style="left:1838px;top:51px;width:71px;height:24px;background:#3aaa64;border-radius:4.5px;"></div>
<span class="t" style="left:1859.30px;top:57.00px;font-size:13.2px;color:#06200f;letter-spacing:-0.759px;">Share</span>
<svg class="r" style="left:0;top:0" width="1920" height="80" viewBox="0 0 1920 80"><g><path d="M18.5 15.8H24v4.1h-6.7V17a1.2 1.2 0 0 1 1.2-1.2z" fill="#5fc14a"/><path d="M24 15.8h5a1.2 1.2 0 0 1 1.2 1.2v2.9H24z" fill="#9ee06c"/><rect x="17.3" y="19.9" width="6.7" height="4" fill="#1f9e57"/><rect x="24" y="19.9" width="6.2" height="4" fill="#33b860"/><path d="M17.3 23.9H24v8h-5.5a1.2 1.2 0 0 1-1.2-1.2z" fill="#176b3a"/><path d="M24 23.9h6.2v6.8a1.2 1.2 0 0 1-1.2 1.2h-5z" fill="#1e8546"/><rect x="15" y="21.6" width="7.8" height="8.2" rx="1" fill="#107c41"/><path d="M17.2 23.6l3.4 4.2M20.6 23.6l-3.4 4.2" stroke="#fff" stroke-width="1.2" fill="none"/></g><g fill="none" stroke="#fff" stroke-width="1.25" stroke-linejoin="round"><path d="M48.6 16.6h12.6a1.2 1.2 0 0 1 1.2 1.2v12.4a1.2 1.2 0 0 1-1.2 1.2H50.4l-3-3V17.8a1.2 1.2 0 0 1 1.2-1.2z"/><path d="M51.6 16.6v5.6h8v-5.6"/><path d="M51.6 31.4v-4.6h7.8v4.6"/></g><g fill="none" stroke="#fff" stroke-width="1.25" stroke-linecap="round" stroke-linejoin="round"><path d="M77.6 16.4v6.1h6.1"/><path d="M77.9 22.2l4.6-4.5a5 5 0 0 1 7.1 7.1l-7.2 7"/><path d="M98 22.4l2.8 2.4 2.8-2.4" stroke-width="1.5"/></g><g fill="none" stroke="#5c5c5c" stroke-width="1.25" stroke-linecap="round" stroke-linejoin="round"><path d="M129.9 16.4v6.1h-6.1"/><path d="M129.6 22.2l-4.6-4.5a5 5 0 0 0-7.1 7.1l7.2 7"/><path d="M137.2 22.4l2.6 2.3 2.6-2.3" stroke="#4a4a4a" stroke-width="1.4"/></g><g fill="none" stroke="#fff" stroke-width="1.3" stroke-linecap="round" stroke-linejoin="round"><path d="M158 21.2h7"/><path d="M158.8 24.2l2.7 2.3 2.7-2.3"/></g><g fill="none" stroke="#b8b8b8" stroke-width="1.2" stroke-linecap="round"><circle cx="806.8" cy="21.2" r="4.3"/><path d="M803.6 24.6l-5.4 5.6"/></g><g fill="none" stroke="#fff" stroke-width="1.1"><path d="M1796 23.5h10"/><rect x="1844.5" y="21.4" width="7.6" height="7.6" rx="1.6"/><path d="M1846.6 19.5h5a2.4 2.4 0 0 1 2.4 2.4v5"/><path d="M1892 19.1l10 10M1902 19.1l-10 10"/></g><g fill="none" stroke="#0c0c0c" stroke-width="1.15" stroke-linejoin="round" stroke-linecap="round"><path d="M1843.4 61.2v7.200h9.200v-3.800"/><path d="M1845.600 65.200c.2-3 2-4.600 4.900-4.700v-2.300l3.400 3.400-3.400 3.400v-2.300c-2.300 0-3.800.7-4.900 2.500z"/><path d="M1898.6 62.2l2.9 2.5 2.9-2.5" stroke-width="1.3"/></g></svg>
<div class="r" style="left:7px;top:186px;width:102px;height:26px;background:#1f1f1f;border:1px solid #555;border-radius:5px;box-sizing:border-box;"></div>
<span class="t" style="left:13.57px;top:194.00px;font-size:12.6px;color:#fff;letter-spacing:0.458px;">H29</span>
<div class="r" style="left:129px;top:186px;width:74px;height:26px;background:#1f1f1f;border:1px solid #555;border-radius:5px;box-sizing:border-box;"></div>
<div class="r" style="left:207px;top:186px;width:1706px;height:26px;background:#272727;border:1px solid #4a4a4a;border-radius:5px;box-sizing:border-box;"></div>
<svg class="r" style="left:0;top:180px" width="1920" height="40" viewBox="0 180 1920 40"><g fill="none" stroke-linecap="round" stroke-linejoin="round"><path d="M93.4 197l4.6 4.4 4.6-4.400" stroke="#e0e0e0" stroke-width="1.2"/><path d="M136.6 193.400l11.400 11.400M148 193.400l-11.400 11.400" stroke="#6a6a6a" stroke-width="1.1"/><path d="M158.600 200.200l4.400 4.400 10.400-10.800" stroke="#6a6a6a" stroke-width="1.1"/><path d="M1899.400 196.200l4.700 4.500 4.700-4.500" stroke="#e0e0e0" stroke-width="1.2"/></g><g fill="#e8e8e8"><circle cx="118.800" cy="194.800" r="1.100"/><circle cx="118.800" cy="199.300" r="1.100"/><circle cx="118.800" cy="203.800" r="1.100"/></g></svg>
<span class="t" style="left:182.3px;top:187.6px;font-size:17.5px;color:#e8e8e8;font-family:'Liberation Serif',serif;font-style:italic;font-weight:bold;letter-spacing:-0.5px">fx</span>
<div class="r" style="left:115px;top:987px;width:110px;height:27px;background:#fff;border-radius:0 0 5px 5px;"></div>
<span class="t" style="left:122.72px;top:994.00px;font-size:13.2px;color:#3a3a3a;letter-spacing:0.276px;font-weight:bold;">Meetings Data</span>
<div class="r" style="left:123px;top:1009.5px;width:93.5px;height:2px;background:#1e8e4e;"></div>
<div class="r" style="left:228px;top:993px;width:1px;height:17px;background:#6a6a6a;"></div>
<svg class="r" style="left:0;top:0" width="1920" height="1019" viewBox="0 0 1920 1019" pointer-events="none"><g fill="none" stroke="#9a9a9a" stroke-width="1.3" stroke-linecap="round" stroke-linejoin="round"><path d="M33.600 997.300l-4.800 4.800 4.800 4.800"/><path d="M61 997.300l4.800 4.800-4.800 4.800"/></g><path d="M270.700 1002.100h11.600M276.500 996.300v11.600" stroke="#e8e8e8" stroke-width="1.2" fill="none"/><g fill="#e8e8e8"><rect x="1154" y="998.800" width="2" height="2"/><rect x="1154" y="1003.100" width="2" height="2"/><rect x="1154" y="1007.400" width="2" height="2"/></g><rect x="1172" y="994" width="732" height="17" rx="8.5" fill="#171717"/><rect x="1188" y="998" width="609.500" height="9" rx="4.500" fill="#9c9c9c"/><path d="M1176.300 1002.500l6.400-5v10z" fill="#9c9c9c"/><path d="M1897.600 1002.500l-6.800-5.400v10.800z" fill="#9c9c9c"/><rect x="1902" y="219" width="17" height="770" rx="8.500" fill="#151515"/><rect x="1906.500" y="236" width="8.700" height="588.500" rx="4.300" fill="#9c9c9c"/><path d="M1910.800 223.600l5 6.600h-10z" fill="#9c9c9c"/><path d="M1910.800 984.600l4.600-6.400h-9.200z" fill="#9c9c9c"/></svg>
</body></html>
